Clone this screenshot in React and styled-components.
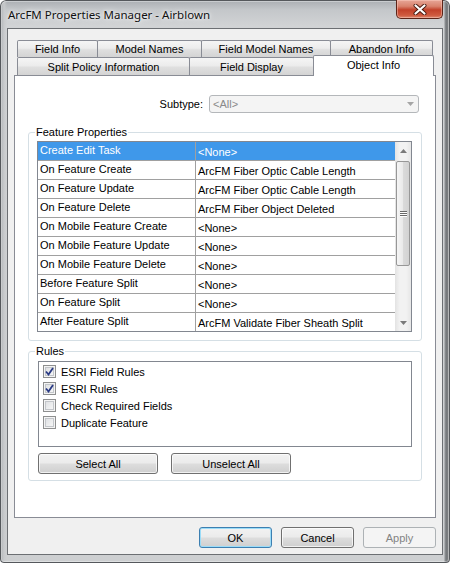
import React from 'react';
import styled, { createGlobalStyle } from 'styled-components';

const Global = createGlobalStyle`
  html, body { margin: 0; padding: 0; background: #fff; }
  body { font-family: "Liberation Sans", Arial, sans-serif; font-size: 11px; color: #000; }
  * { box-sizing: border-box; }
`;

const Window = styled.div`
  width: 450px;
  height: 563px;
  display: flex;
  flex-direction: column;
  border-radius: 6px 6px 4px 4px;
  overflow: hidden;
  background:
    linear-gradient(90deg, transparent 444px, #8d9093 445px, #6f7275 447px, #9a9c9e 449px),
    linear-gradient(90deg, #8a8d90 0, #b9bcbf 2px, #c8cacc 4px, transparent 7px),
    linear-gradient(180deg, #a9adb1 0, #c4c7ca 10px, #d1d3d5 26px, #cdcfd1 100%);
  box-shadow: inset 0 0 0 1px #55585c, inset 0 0 0 2px rgba(255, 255, 255, 0.35);
`;

const TitleBar = styled.div`
  height: 28px;
  flex: none;
  display: flex;
  align-items: flex-start;
  padding-left: 8px;
`;

const Title = styled.div`
  margin-top: 7px;
  font-family: "Noto Sans", "Open Sans", sans-serif;
  font-size: 11.5px;
  line-height: 16px;
  color: #111;
  text-shadow: 0 0 6px rgba(255, 255, 255, 0.9), 0 0 3px rgba(255, 255, 255, 0.8);
`;

const CloseButton = styled.div`
  margin-left: auto;
  margin-right: 7px;
  width: 47px;
  height: 19px;
  border: 1px solid #5c2418;
  border-top: none;
  border-radius: 0 0 5px 5px;
  background: linear-gradient(180deg, #e7a697 0%, #d9826d 35%, #c2412a 55%, #cf5a3f 85%, #dc8a72 100%);
  box-shadow: inset 0 0 0 1px rgba(255, 210, 200, 0.45);
  display: flex;
  align-items: center;
  justify-content: center;
`;

const Client = styled.div`
  flex: 1;
  margin: 0 7px 8px 7px;
  border: 1px solid #6c6f73;
  background: #f0f0f0;
  display: flex;
  flex-direction: column;
  padding: 11px 6px 6px 6px;
`;

const TabHeader = styled.div`
  height: 35px;
  flex: none;
  display: flex;
  flex-direction: column;
  padding-left: 3px;
`;

const TabRow = styled.div`
  display: flex;
  height: ${(p) => p.$h}px;
  align-items: flex-start;
`;

const Tab = styled.div`
  position: relative;
  width: ${(p) => p.$w}px;
  height: ${(p) => (p.$active ? 21 : p.$h)}px;
  margin-left: -1px;
  margin-top: ${(p) => (p.$active ? -2 : 0)}px;
  z-index: ${(p) => (p.$active ? 2 : 0)};
  &:first-child { margin-left: 0; }
  border: 1px solid #898c95;
  border-bottom: none;
  border-radius: 2px 2px 0 0;
  background: ${(p) =>
    p.$active
      ? '#fff'
      : 'linear-gradient(180deg, #f5f5f5 0%, #ececec 45%, #dfdfdf 55%, #d4d4d4 100%)'};
  display: flex;
  justify-content: center;
  align-items: ${(p) => (p.$active ? 'flex-start' : 'center')};
  padding-top: ${(p) => (p.$active ? 2 : 0)}px;
  line-height: 14px;
  white-space: nowrap;
`;

const Panel = styled.div`
  height: 443px;
  flex: none;
  border: 1px solid #898c95;
  background: #fff;
  padding: 19px 13px 0 13px;
  display: flex;
  flex-direction: column;
`;

const SubtypeRow = styled.div`
  display: flex;
  justify-content: flex-end;
  align-items: center;
  gap: 6px;
  padding-right: 3px;
  height: 18px;
`;

const Combo = styled.div`
  width: 210px;
  height: 18px;
  border: 1px solid #b4b7ba;
  border-radius: 3px;
  background: #f4f4f4;
  color: #8a8a8a;
  display: flex;
  align-items: center;
  justify-content: space-between;
  padding: 0 4px 0 3px;
`;

const Group = styled.div`
  position: relative;
  margin-top: ${(p) => p.$mt}px;
  border: 1px solid #d5dfe5;
  border-radius: 3px;
  padding: ${(p) => p.$pad};
`;

const Legend = styled.span`
  position: absolute;
  top: -7px;
  left: 6px;
  padding: 0 1px;
  background: #fff;
  line-height: 13px;
`;

const Grid = styled.div`
  height: 191px;
  border: 1px solid #828790;
  display: flex;
`;

const Rows = styled.div`
  flex: 1;
  display: flex;
  flex-direction: column;
`;

const Row = styled.div`
  height: 19px;
  flex: none;
  display: grid;
  grid-template-columns: 158px 1fr;
  border-bottom: 1px solid #a0a0a0;
  &:last-child { border-bottom: none; height: 18px; }
  background: ${(p) => (p.$selected ? '#3f98ea' : '#fff')};
  color: ${(p) => (p.$selected ? '#fff' : '#000')};
`;

const Cell = styled.div`
  padding-left: 2px;
  padding-top: ${(p) => p.$offset}px;
  line-height: 15px;
  white-space: nowrap;
  overflow: hidden;
  border-right: ${(p) => (p.$divider ? '1px solid #a0a0a0' : 'none')};
`;

const ScrollBar = styled.div`
  width: 16px;
  flex: none;
  display: flex;
  flex-direction: column;
  background: linear-gradient(90deg, #e3e3e3, #f2f2f2 30%, #f2f2f2 70%, #e6e6e6);
`;

const ArrowBox = styled.div`
  height: 17px;
  flex: none;
  display: flex;
  align-items: center;
  justify-content: center;
`;

const Thumb = styled.div`
  margin: 2px 1px 0 1px;
  height: 105px;
  flex: none;
  border: 1px solid #979797;
  border-radius: 2px;
  background: linear-gradient(90deg, #f5f5f5 0%, #e9e9e9 50%, #dadada 51%, #d2d2d2 100%);
  display: flex;
  flex-direction: column;
  align-items: center;
  justify-content: center;
  gap: 1px;
`;

const Grip = styled.div`
  width: 7px;
  height: 1px;
  background: #6a6a6a;
  box-shadow: 0 1px 0 #fff;
`;

const Fill = styled.div`
  flex: 1;
`;

const List = styled.div`
  height: 86px;
  border: 1px solid #828790;
  background: #fff;
  padding: 1px 0 0 4px;
`;

const CheckItem = styled.div`
  height: 17px;
  display: flex;
  align-items: center;
  gap: 5px;
  line-height: 14px;
`;

const Box = styled.div`
  width: 13px;
  height: 13px;
  flex: none;
  border: 1px solid #8e8f8f;
  background: linear-gradient(135deg, #d9dbde 0%, #eeeff0 60%, #fafafa 100%);
  box-shadow: inset 0 0 0 1px #f4f4f4, inset 0 0 0 2px #c3c6ca;
  display: flex;
  align-items: center;
  justify-content: center;
`;

const ButtonRow = styled.div`
  display: flex;
  gap: ${(p) => p.$gap}px;
  justify-content: ${(p) => p.$justify || 'flex-start'};
  margin-top: ${(p) => p.$mt}px;
`;

const Button = styled.button`
  width: ${(p) => p.$w}px;
  height: 21px;
  padding: 0;
  border-radius: 3px;
  font-family: "Liberation Sans", Arial, sans-serif;
  font-size: 11px;
  border: 1px solid ${(p) => (p.$default ? '#3c7fb1' : p.disabled ? '#adb2b5' : '#707070')};
  color: ${(p) => (p.disabled ? '#838383' : '#000')};
  background: ${(p) =>
    p.disabled
      ? '#f4f4f4'
      : 'linear-gradient(180deg, #f2f2f2 0%, #ebebeb 48%, #dddddd 52%, #cfcfcf 100%)'};
  box-shadow: ${(p) =>
    p.$default
      ? 'inset 0 0 0 1px #9bdcf8'
      : p.disabled
      ? 'none'
      : 'inset 0 0 0 1px rgba(255,255,255,0.7)'};
`;

const Arrow = ({ dir, color = '#7a7a7a' }) => (
  <svg width="7" height="4" viewBox="0 0 7 4">
    {dir === 'up' ? (
      <polygon points="0,4 7,4 3.5,0" fill={color} />
    ) : (
      <polygon points="0,0 7,0 3.5,4" fill={color} />
    )}
  </svg>
);

const CheckMark = () => (
  <svg width="9" height="9" viewBox="0 0 9 9">
    <path d="M1 4.5 L3.5 7.5 L8 1" fill="none" stroke="#2a3a84" strokeWidth="1.8" />
  </svg>
);

const properties = [
  ['Create Edit Task', '<None>'],
  ['On Feature Create', 'ArcFM Fiber Optic Cable Length'],
  ['On Feature Update', 'ArcFM Fiber Optic Cable Length'],
  ['On Feature Delete', 'ArcFM Fiber Object Deleted'],
  ['On Mobile Feature Create', '<None>'],
  ['On Mobile Feature Update', '<None>'],
  ['On Mobile Feature Delete', '<None>'],
  ['Before Feature Split', '<None>'],
  ['On Feature Split', '<None>'],
  ['After Feature Split', 'ArcFM Validate Fiber Sheath Split'],
];

const rules = [
  ['ESRI Field Rules', true],
  ['ESRI Rules', true],
  ['Check Required Fields', false],
  ['Duplicate Feature', false],
];

export default function App() {
  return (
    <>
      <Global />
      <Window>
        <TitleBar>
          <Title>ArcFM Properties Manager - Airblown</Title>
          <CloseButton>
            <svg width="14" height="11" viewBox="0 0 14 11">
              <path d="M2.5 1.5 L11.5 9.5 M11.5 1.5 L2.5 9.5" stroke="#4a1a10" strokeWidth="4" strokeLinecap="round" />
              <path d="M2.5 1.5 L11.5 9.5 M11.5 1.5 L2.5 9.5" stroke="#ffffff" strokeWidth="2.2" strokeLinecap="round" />
            </svg>
          </CloseButton>
        </TitleBar>
        <Client>
          <TabHeader>
            <TabRow $h={17}>
              <Tab $w={81} $h={17}>Field Info</Tab>
              <Tab $w={105} $h={17}>Model Names</Tab>
              <Tab $w={130} $h={17}>Field Model Names</Tab>
              <Tab $w={103} $h={17}>Abandon Info</Tab>
            </TabRow>
            <TabRow $h={18}>
              <Tab $w={173} $h={18}>Split Policy Information</Tab>
              <Tab $w={125} $h={18}>Field Display</Tab>
              <Tab $w={121} $h={18} $active>Object Info</Tab>
            </TabRow>
          </TabHeader>
          <Panel>
            <SubtypeRow>
              <span>Subtype:</span>
              <Combo>
                <span>&lt;All&gt;</span>
                <Arrow dir="down" color="#a5a5a5" />
              </Combo>
            </SubtypeRow>
            <Group $mt={19} $pad="8px 9px 8px 8px">
              <Legend>Feature Properties</Legend>
              <Grid>
                <Rows>
                  {properties.map(([k, v], i) => (
                    <Row key={k} $selected={i === 0}>
                      <Cell $divider $offset={1}>{k}</Cell>
                      <Cell $offset={3}>{v}</Cell>
                    </Row>
                  ))}
                </Rows>
                <ScrollBar>
                  <ArrowBox><Arrow dir="up" /></ArrowBox>
                  <Thumb>
                    <Grip />
                    <Grip />
                    <Grip />
                  </Thumb>
                  <Fill />
                  <ArrowBox><Arrow dir="down" /></ArrowBox>
                </ScrollBar>
              </Grid>
            </Group>
            <Group $mt={10} $pad="9px 9px 6px 9px">
              <Legend>Rules</Legend>
              <List>
                {rules.map(([label, checked]) => (
                  <CheckItem key={label}>
                    <Box>{checked && <CheckMark />}</Box>
                    <span>{label}</span>
                  </CheckItem>
                ))}
              </List>
              <ButtonRow $gap={13} $mt={6}>
                <Button $w={120}>Select All</Button>
                <Button $w={120}>Unselect All</Button>
              </ButtonRow>
            </Group>
          </Panel>
          <ButtonRow $gap={9} $mt={9} $justify="flex-end">
            <Button $w={73} $default>OK</Button>
            <Button $w={73}>Cancel</Button>
            <Button $w={73} disabled>Apply</Button>
          </ButtonRow>
        </Client>
      </Window>
    </>
  );
}
